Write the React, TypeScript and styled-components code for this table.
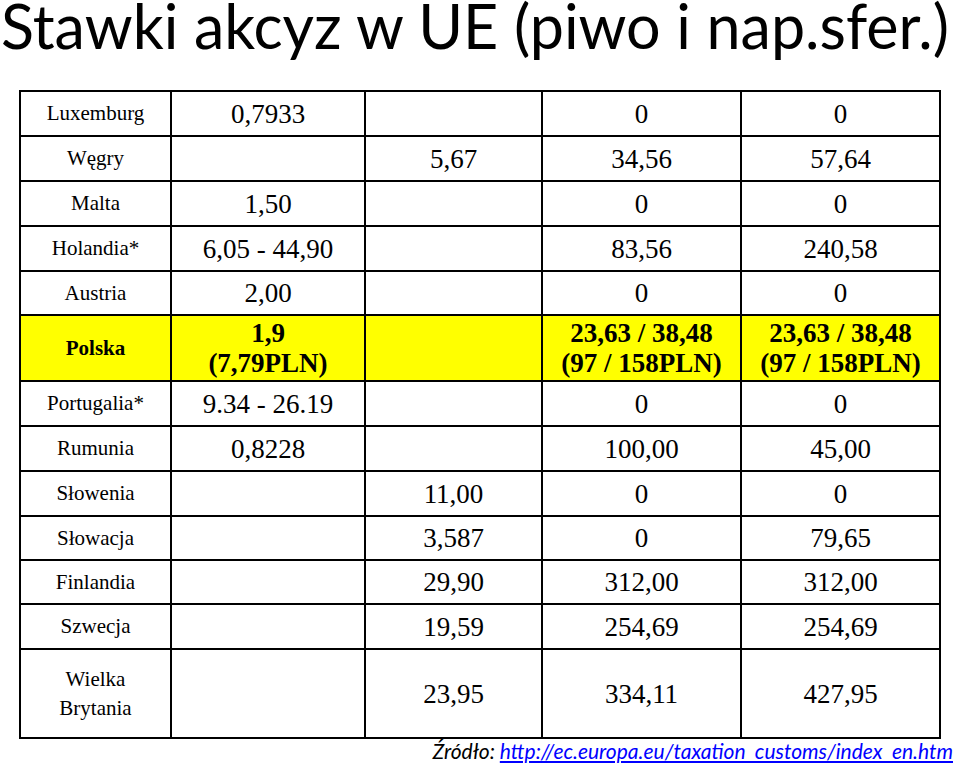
import styled, { createGlobalStyle } from 'styled-components';

const GlobalStyle = createGlobalStyle`
  html, body {
    margin: 0;
    padding: 0;
    background: #ffffff;
  }
`

type Row = {
  country: string[]
  values: string[]
  highlight?: boolean
  height: number
}

const rows: Row[] = [
  { country: ['Luxemburg'], values: ['0,7933', '', '0', '0'], height: 45 },
  { country: ['Węgry'], values: ['', '5,67', '34,56', '57,64'], height: 45 },
  { country: ['Malta'], values: ['1,50', '', '0', '0'], height: 45 },
  { country: ['Holandia*'], values: ['6,05 - 44,90', '', '83,56', '240,58'], height: 45 },
  { country: ['Austria'], values: ['2,00', '', '0', '0'], height: 44 },
  {
    country: ['Polska'],
    values: ['1,9\n(7,79PLN)', '', '23,63 / 38,48\n(97 / 158PLN)', '23,63 / 38,48\n(97 / 158PLN)'],
    highlight: true,
    height: 66,
  },
  { country: ['Portugalia*'], values: ['9.34 - 26.19', '', '0', '0'], height: 45 },
  { country: ['Rumunia'], values: ['0,8228', '', '100,00', '45,00'], height: 45 },
  { country: ['Słowenia'], values: ['', '11,00', '0', '0'], height: 45 },
  { country: ['Słowacja'], values: ['', '3,587', '0', '79,65'], height: 44 },
  { country: ['Finlandia'], values: ['', '29,90', '312,00', '312,00'], height: 44 },
  { country: ['Szwecja'], values: ['', '19,59', '254,69', '254,69'], height: 45 },
  { country: ['Wielka', 'Brytania'], values: ['', '23,95', '334,11', '427,95'], height: 89 },
]

const colWidths = [151, 194, 177, 199, 199]

const App = () => {
  return (
    <Page>
      <GlobalStyle />
      <Title>Stawki akcyz w UE (piwo i nap.sfer.)</Title>
      <Table>
        <colgroup>
          {colWidths.map((w, i) => (
            <col key={i} style={{ width: w }} />
          ))}
        </colgroup>
        <tbody>
          {rows.map((row, i) => (
            <TableRow key={i} $highlight={row.highlight} style={{ height: row.height }}>
              <CountryCell $bold={row.highlight}>
                {row.country.map((c, j) => (
                  <div key={j}>{c}</div>
                ))}
              </CountryCell>
              {row.values.map((v, j) => (
                <ValueCell key={j} $bold={row.highlight}>
                  {v}
                </ValueCell>
              ))}
            </TableRow>
          ))}
        </tbody>
      </Table>
      <Source>
        Źródło: <SourceLink>http://ec.europa.eu/taxation_customs/index_en.htm</SourceLink>
      </Source>
    </Page>
  )
}

export default App

const Page = styled.div`
width: 960px;
height: 765px;
overflow: hidden;
display: flex;
flex-direction: column;
`

const Title = styled.h1`
margin: 0;
padding-left: 1px;
height: 90px;
font-family: Lato, 'Open Sans', sans-serif;
font-weight: 400;
font-size: 61px;
line-height: 52px;
color: #000000;
white-space: nowrap;
`

const Table = styled.table`
margin-left: 19px;
width: 921px;
table-layout: fixed;
border-collapse: collapse;
color: #000000;
`

const TableRow = styled.tr<{ $highlight?: boolean }>`
background: ${p => (p.$highlight ? '#ffff00' : '#ffffff')};
`

const Cell = styled.td<{ $bold?: boolean }>`
border: 2px solid #000000;
padding: 0;
text-align: center;
vertical-align: middle;
font-family: 'Liberation Serif', 'Times New Roman', serif;
font-weight: ${p => (p.$bold ? 700 : 400)};
color: #000000;
`

const CountryCell = styled(Cell)`
font-size: 21px;
line-height: 29px;
`

const ValueCell = styled(Cell)`
font-size: 27px;
line-height: 30px;
white-space: pre-line;
`

const Source = styled.div`
align-self: flex-end;
margin-top: 0;
margin-right: 7px;
font-family: Lato, 'Open Sans', sans-serif;
font-style: italic;
font-size: 21px;
line-height: 24px;
color: #000000;
white-space: nowrap;
`

const SourceLink = styled.span`
color: #0000ff;
text-decoration: underline;
`
